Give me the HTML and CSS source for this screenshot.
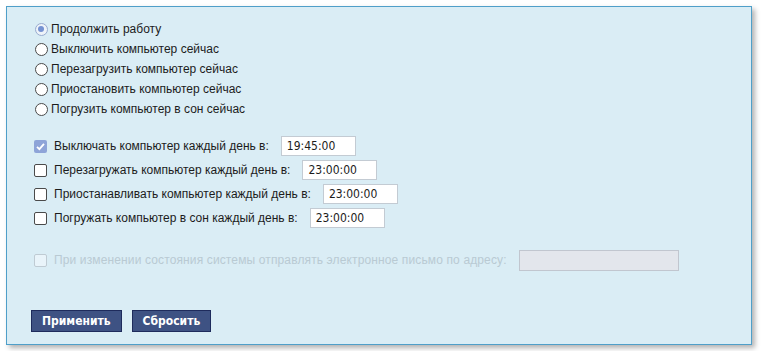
FILE: index.html
```html
<!DOCTYPE html>
<html lang="ru">
<head>
  <meta charset="UTF-8" />
  <meta name="viewport" content="width=device-width, initial-scale=1.0">
  <title>Выключение компьютера</title>
  <link rel="stylesheet" href="styles.css">
</head>
<body>

  <div class="panel">
    <div class="radios">
      <label class="radio-row"><span class="radio checked"></span>Продолжить работу</label>
      <label class="radio-row"><span class="radio"></span>Выключить компьютер сейчас</label>
      <label class="radio-row"><span class="radio"></span>Перезагрузить компьютер сейчас</label>
      <label class="radio-row"><span class="radio"></span>Приостановить компьютер сейчас</label>
      <label class="radio-row"><span class="radio"></span>Погрузить компьютер в сон сейчас</label>
    </div>

    <div class="schedule">
      <div class="check-row">
        <span class="check checked">
          <svg width="13" height="13" viewBox="0 0 13 13"><path d="M3 6.8 L5.4 9.2 L10 3.8" fill="none" stroke="#fff" stroke-width="1.8"/></svg>
        </span>
        <span class="label">Выключать компьютер каждый день в:</span>
        <input class="time" type="text" value="19:45:00">
      </div>
      <div class="check-row">
        <span class="check"></span>
        <span class="label">Перезагружать компьютер каждый день в:</span>
        <input class="time" type="text" value="23:00:00">
      </div>
      <div class="check-row">
        <span class="check"></span>
        <span class="label">Приостанавливать компьютер каждый день в:</span>
        <input class="time" type="text" value="23:00:00">
      </div>
      <div class="check-row">
        <span class="check"></span>
        <span class="label">Погружать компьютер в сон каждый день в:</span>
        <input class="time" type="text" value="23:00:00">
      </div>
    </div>

    <div class="check-row disabled">
      <span class="check"></span>
      <span class="label">При изменении состояния системы отправлять электронное письмо по адресу:</span>
      <input class="email" type="text" disabled>
    </div>

    <div class="actions">
      <button class="btn">Применить</button>
      <button class="btn">Сбросить</button>
    </div>
  </div>

</body>
</html>
```

FILE: styles.css
```css
body {
  margin: 0;
  padding: 6px;
  background: #ffffff;
  font-family: "Liberation Sans", Arial, sans-serif;
  font-size: 12px;
  color: #1c1c1c;
}

.panel {
  box-sizing: border-box;
  width: 746px;
  height: 339px;
  background: #daedf5;
  border: 1px solid #4f9fc9;
  box-shadow: 3px 3px 5px rgba(0, 0, 0, 0.3);
  padding: 12px 0 0 24px;
}

.radios {
  display: flex;
  flex-direction: column;
}

.radio-row {
  display: flex;
  align-items: center;
  height: 20px;
  margin-left: 4px;
}

.radio {
  box-sizing: border-box;
  width: 13px;
  height: 13px;
  border-radius: 50%;
  border: 1.5px solid #4a4a4a;
  background: #fff;
  margin-right: 3px;
  position: relative;
}

.radio.checked {
  border-color: #98abcf;
  background: #eef3f9;
}

.radio.checked::after {
  content: "";
  position: absolute;
  left: 2px;
  top: 2px;
  width: 6px;
  height: 6px;
  border-radius: 50%;
  background: #7592d2;
}

.schedule {
  margin-top: 15px;
  display: flex;
  flex-direction: column;
}

.check-row {
  display: flex;
  align-items: center;
  height: 24px;
  margin-left: 3px;
}

.check {
  box-sizing: border-box;
  width: 13px;
  height: 13px;
  border: 1.5px solid #4a4a4a;
  border-radius: 2px;
  background: #fff;
  margin-right: 7px;
  display: flex;
}

.check.checked {
  border: none;
  background: #8ea4d8;
}

.label {
  margin-right: 12px;
}

input.time {
  box-sizing: border-box;
  width: 75px;
  height: 20px;
  border: 1px solid #c3cbd3;
  background: #fff;
  padding: 0 5px;
  font-family: "DejaVu Sans Condensed", "DejaVu Sans", sans-serif;
  font-size: 12px;
  color: #1c1c1c;
}

.disabled {
  margin-top: 18px;
  color: #b9cad3;
  letter-spacing: 0.13px;
}

.disabled .check {
  border-color: #bfcbd3;
  background: #e9f4fa;
}

input.email {
  box-sizing: border-box;
  width: 160px;
  height: 21px;
  border: 1px solid #c1c6cf;
  background: #e3e6ec;
}

.actions {
  margin-top: 38px;
  display: flex;
  gap: 10px;
}

.btn {
  height: 22px;
  padding: 0 10px;
  background: #3e5283;
  border: 1px solid #1e2b5c;
  color: #fff;
  font-family: "DejaVu Sans Condensed", "DejaVu Sans", sans-serif;
  font-weight: bold;
  font-size: 12px;
}
```
